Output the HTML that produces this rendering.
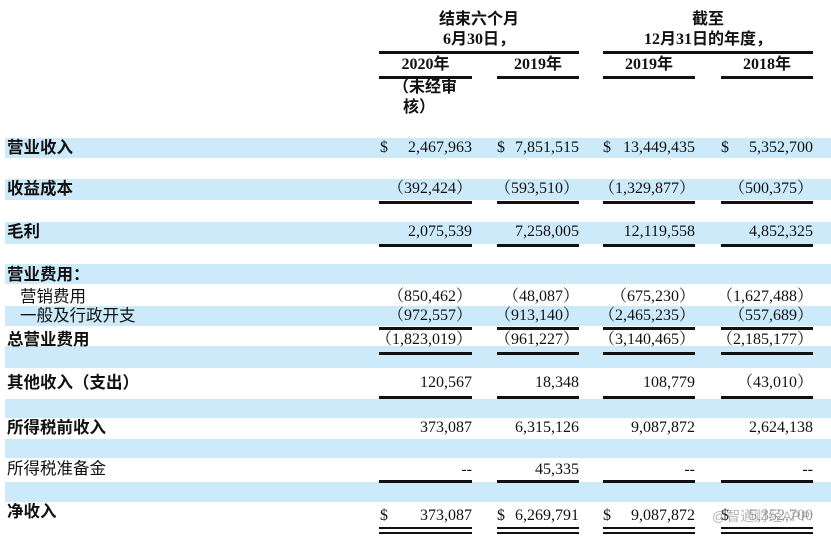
<!DOCTYPE html>
<html><head><meta charset="utf-8"><style>
body{margin:0;width:831px;height:538px;background:#fff;position:relative;overflow:hidden;font-family:"Liberation Serif","Noto Serif CJK SC",serif;color:#111}
.b{position:absolute;left:5px;width:826px;background:#cdeafb}
.l{position:absolute;left:7px;font-family:"Liberation Sans","Noto Sans CJK SC",sans-serif;font-size:16.5px;line-height:20px;white-space:nowrap}
.l.bd{font-weight:bold}
.n{position:absolute;font-size:16px;line-height:20px;white-space:nowrap;text-align:right}
.d{position:absolute;font-size:16px;line-height:20px}
.h{position:absolute;font-size:16px;font-weight:bold;line-height:20px;text-align:center;white-space:nowrap;font-family:"Liberation Serif","Noto Sans CJK SC",serif}
.ln{position:absolute;height:3px;background:#111}
</style></head><body>
<div class="b" style="top:138px;height:20px"></div>
<div class="b" style="top:179px;height:21px"></div>
<div class="b" style="top:222px;height:22px"></div>
<div class="b" style="top:264px;height:20px"></div>
<div class="b" style="top:306px;height:20px"></div>
<div class="b" style="top:346px;height:22px"></div>
<div class="b" style="top:399px;height:19px"></div>
<div class="b" style="top:439px;height:19px"></div>
<div class="b" style="top:482px;height:20px"></div>

<div class="h" style="left:379px;width:200px;top:10px">结束六个月</div>
<div class="h" style="left:379px;width:200px;top:30px">6月30日，</div>
<div class="h" style="left:603px;width:210px;top:10px">截至</div>
<div class="h" style="left:603px;width:210px;top:30px">12月31日的年度，</div>
<div class="ln" style="left:379px;width:200px;top:51px"></div>
<div class="ln" style="left:603px;width:210px;top:51px"></div>
<div class="h" style="left:379px;width:93px;top:55px">2020年</div>
<div class="h" style="left:497px;width:82px;top:55px">2019年</div>
<div class="h" style="left:603px;width:92px;top:55px">2019年</div>
<div class="h" style="left:721px;width:92px;top:55px">2018年</div>
<div class="ln" style="left:379px;width:93px;top:76px"></div>
<div class="ln" style="left:497px;width:82px;top:76px"></div>
<div class="ln" style="left:603px;width:92px;top:76px"></div>
<div class="ln" style="left:721px;width:92px;top:76px"></div>
<div class="h" style="left:393px;top:78px">（未经审</div>
<div class="h" style="left:403px;top:98px">核）</div>

<div class="l bd" style="top:138px">营业收入</div>
<div class="d" style="left:380px;top:138px">$</div><div class="n" style="right:359px;top:138px">2,467,963</div>
<div class="d" style="left:497px;top:138px">$</div><div class="n" style="right:252px;top:138px">7,851,515</div>
<div class="d" style="left:603px;top:138px">$</div><div class="n" style="right:136px;top:138px">13,449,435</div>
<div class="d" style="left:721px;top:138px">$</div><div class="n" style="right:18px;top:138px">5,352,700</div>

<div class="l bd" style="top:179px">收益成本</div>
<div class="n" style="right:359px;top:179px">（392,424）</div>
<div class="n" style="right:252px;top:179px">（593,510）</div>
<div class="n" style="right:136px;top:179px">（1,329,877）</div>
<div class="n" style="right:18px;top:179px">（500,375）</div>

<div class="l bd" style="top:222px">毛利</div>
<div class="n" style="right:359px;top:222px">2,075,539</div>
<div class="n" style="right:252px;top:222px">7,258,005</div>
<div class="n" style="right:136px;top:222px">12,119,558</div>
<div class="n" style="right:18px;top:222px">4,852,325</div>

<div class="l bd" style="top:265px">营业费用：</div>
<div class="l" style="top:287px;left:20px">营销费用</div>
<div class="n" style="right:359px;top:287px">（850,462）</div>
<div class="n" style="right:252px;top:287px">（48,087）</div>
<div class="n" style="right:136px;top:287px">（675,230）</div>
<div class="n" style="right:18px;top:287px">（1,627,488）</div>
<div class="l" style="top:306px;left:20px">一般及行政开支</div>
<div class="n" style="right:359px;top:306px">（972,557）</div>
<div class="n" style="right:252px;top:306px">（913,140）</div>
<div class="n" style="right:136px;top:306px">（2,465,235）</div>
<div class="n" style="right:18px;top:306px">（557,689）</div>
<div class="l bd" style="top:330px">总营业费用</div>
<div class="n" style="right:359px;top:330px">（1,823,019）</div>
<div class="n" style="right:252px;top:330px">（961,227）</div>
<div class="n" style="right:136px;top:330px">（3,140,465）</div>
<div class="n" style="right:18px;top:330px">（2,185,177）</div>

<div class="l bd" style="top:373px">其他收入（支出）</div>
<div class="n" style="right:359px;top:373px">120,567</div>
<div class="n" style="right:252px;top:373px">18,348</div>
<div class="n" style="right:136px;top:373px">108,779</div>
<div class="n" style="right:18px;top:373px">（43,010）</div>

<div class="l bd" style="top:418px">所得税前收入</div>
<div class="n" style="right:359px;top:418px">373,087</div>
<div class="n" style="right:252px;top:418px">6,315,126</div>
<div class="n" style="right:136px;top:418px">9,087,872</div>
<div class="n" style="right:18px;top:418px">2,624,138</div>

<div class="l" style="top:459px">所得税准备金</div>
<div class="n" style="right:359px;top:460px">--</div>
<div class="n" style="right:252px;top:460px">45,335</div>
<div class="n" style="right:136px;top:460px">--</div>
<div class="n" style="right:18px;top:460px">--</div>

<div class="l bd" style="top:502px">净收入</div>
<div class="d" style="left:380px;top:506px">$</div><div class="n" style="right:359px;top:506px">373,087</div>
<div class="d" style="left:497px;top:506px">$</div><div class="n" style="right:252px;top:506px">6,269,791</div>
<div class="d" style="left:603px;top:506px">$</div><div class="n" style="right:136px;top:506px">9,087,872</div>
<div class="d" style="left:721px;top:506px">$</div><div class="n" style="right:18px;top:506px;color:#999">5,352,700</div>

<div class="ln" style="left:379px;width:93px;top:201px"></div><div class="ln" style="left:497px;width:82px;top:201px"></div><div class="ln" style="left:603px;width:92px;top:201px"></div><div class="ln" style="left:721px;width:92px;top:201px"></div>
<div class="ln" style="left:379px;width:93px;top:244px"></div><div class="ln" style="left:497px;width:82px;top:244px"></div><div class="ln" style="left:603px;width:92px;top:244px"></div><div class="ln" style="left:721px;width:92px;top:244px"></div>
<div class="ln" style="left:379px;width:93px;top:327px"></div><div class="ln" style="left:497px;width:82px;top:327px"></div><div class="ln" style="left:603px;width:92px;top:327px"></div><div class="ln" style="left:721px;width:92px;top:327px"></div>
<div class="ln" style="left:379px;width:93px;top:352px"></div><div class="ln" style="left:497px;width:82px;top:352px"></div><div class="ln" style="left:603px;width:92px;top:352px"></div><div class="ln" style="left:721px;width:92px;top:352px"></div>
<div class="ln" style="left:379px;width:93px;top:396px"></div><div class="ln" style="left:497px;width:82px;top:396px"></div><div class="ln" style="left:603px;width:92px;top:396px"></div><div class="ln" style="left:721px;width:92px;top:396px"></div>
<div class="ln" style="left:379px;width:93px;top:480px"></div><div class="ln" style="left:497px;width:82px;top:480px"></div><div class="ln" style="left:603px;width:92px;top:480px"></div><div class="ln" style="left:721px;width:92px;top:480px"></div>
<div class="ln" style="left:379px;width:93px;top:527px;height:2px"></div><div class="ln" style="left:497px;width:82px;top:527px;height:2px"></div><div class="ln" style="left:603px;width:92px;top:527px;height:2px"></div><div class="ln" style="left:721px;width:92px;top:527px;height:2px"></div>
<div class="ln" style="left:379px;width:93px;top:532px;height:2px"></div><div class="ln" style="left:497px;width:82px;top:532px;height:2px"></div><div class="ln" style="left:603px;width:92px;top:532px;height:2px"></div><div class="ln" style="left:721px;width:92px;top:532px;height:2px"></div>
<div style="position:absolute;left:712px;top:506px;font-family:'Liberation Sans','Noto Sans CJK SC',sans-serif;font-size:14px;color:rgba(150,150,150,.7);line-height:20px">@智通财经APP</div>
</body></html>
